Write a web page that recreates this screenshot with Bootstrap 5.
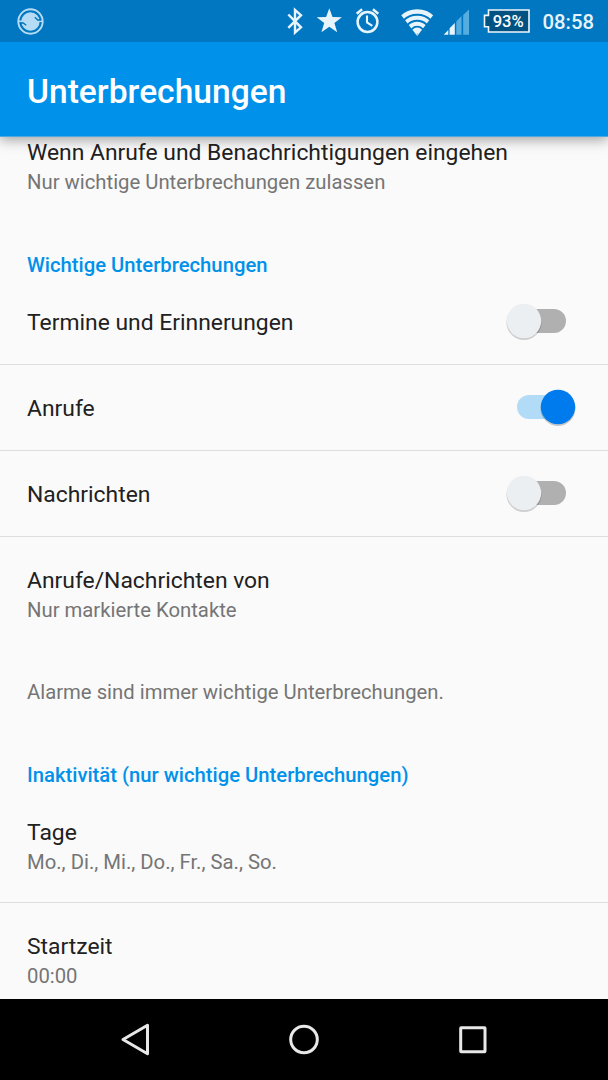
<!DOCTYPE html>
<html lang="de">
<head>
<meta charset="utf-8">
<meta name="viewport" content="width=device-width, initial-scale=1">
<title>Unterbrechungen</title>
<link rel="stylesheet" href="https://cdn.jsdelivr.net/npm/bootstrap@5.3.0/dist/css/bootstrap.min.css">
<style>
body{font-family:Roboto,"Liberation Sans",sans-serif;background:#fafafa;color:#212121;height:1080px}
svg{display:block;flex:none}
.statusbar{height:42px;background:#0077c0;color:#e8f4fc;padding-left:17px;padding-right:14px;position:relative;z-index:3}
.clock{font-size:20.3px;font-weight:500;line-height:42px;margin-left:12px;padding-top:1px}
.appbar{height:95px;background:#0091ea;border-bottom:1px solid #4fa9e0;box-shadow:0 3px 12px rgba(0,0,0,.36);z-index:2;padding:5px 27px 0}
.appbar h1{font-size:33.6px;font-weight:500;line-height:40px}
.prefs{flex:1 1 0;min-height:0}
.pref{padding:0 27px;border-bottom:1px solid #dedede}
.pref-title{font-size:22.86px;line-height:30px;padding-top:1px}
.pref-sub{font-size:20.3px;line-height:30px;color:#757575}
.pref .pref-sub{margin-top:-1px}
.section-label{font-size:20.25px;line-height:30px;font-weight:500;color:#0091ea;padding:0 27px;margin:0}
.toggle-row{height:86px;padding-top:1px}
.toggle-row svg{margin-bottom:2px}
.h-first{height:113px}.h-sec{height:29px}.h-from{height:140px;padding-top:28px}
.h-note{height:83px;padding:0 27px}.h-days{height:114px;padding-top:28px}.h-start{padding-top:28px}
.switch-off{margin-right:14px}.switch-on{margin-right:5px}
.navbuttons{height:81px;background:#000}
</style>
</head>
<body class="d-flex flex-column overflow-hidden">
<header class="statusbar d-flex align-items-center flex-shrink-0">
  <svg width="27" height="27" viewBox="0 0 27 27"><circle cx="13.500" cy="13.500" r="12.200" fill="none" stroke="#b5dcf4" stroke-width="1.900"/><circle cx="13.500" cy="13.500" r="9.200" fill="#b5dcf4"/><path d="M1.500 13.300h5M20.500 13.300h5" stroke="#b5dcf4" stroke-width="1.500"/><path d="M17.800 9.300l3 2.700h3M9.200 17.300l-3-2.300h-3" fill="none" stroke="#0077c0" stroke-width="1.400"/></svg>
  <div class="d-flex align-items-center ms-auto">
    <svg width="156" height="42" viewBox="286 0 156 42">
      <path d="M288.300 14.500L301 27.300l-6 5.200V10l6 5.200-12.700 12.600" fill="none" stroke="#e8f4fc" stroke-width="2.400"/>
      <path d="M329.300 8.300l3.200 8.800 9.400.2-7.500 5.700 2.800 9.300-7.900-5.500-7.900 5.500 2.800-9.300-7.500-5.700 9.400-.2z" fill="#e8f4fc"/>
      <g fill="none" stroke="#e8f4fc" stroke-width="2.500"><circle cx="367.500" cy="22" r="9.900"/><path d="M367 15.500v7l5.300 3.400" stroke-width="2.100"/><path d="M356.700 13.700l5.400-4.400M378.300 13.700l-5.400-4.400" stroke-width="2.500"/></g>
      <clipPath id="fan"><path d="M417.200 36L400.300 14a27 27 0 0 1 33.800 0z"/></clipPath>
      <g clip-path="url(#fan)" fill="none" stroke="#e8f4fc" stroke-width="4.400"><circle cx="417.200" cy="34" r="22.500"/><circle cx="417.200" cy="34" r="16.300" stroke-width="4"/><circle cx="417.200" cy="34" r="10.200" stroke-width="4"/><circle cx="417.200" cy="34" r="3" stroke-width="7"/></g>
    </svg>
    <svg width="89" height="42" viewBox="442 0 89 42">
      <path d="M443.700 34.700l4.600-4.600v4.600zM449.600 28.200l5.200-5.300v11.800h-5.200z" fill="#e8f4fc"/>
      <path d="M456.300 21.400l5.200-5.300v18.600h-5.200zM463.200 15l5.800-5.500v25.200h-5.800z" fill="#56aee0"/>
      <path d="M488.500 10H529v22h-40.500v-5.200h-4V15.400h4z" fill="#005283" stroke="#f0f7fc" stroke-width="1.600"/>
      <text x="508.200" y="26.800" text-anchor="middle" font-family="Roboto" font-size="17" font-weight="500" fill="#fff" textLength="31" lengthAdjust="spacingAndGlyphs">93%</text>
    </svg>
    <span class="clock">08:58</span>
  </div>
</header>
<div class="appbar position-relative d-flex align-items-center flex-shrink-0"><h1 class="m-0 text-white">Unterbrechungen</h1></div>
<main class="prefs overflow-hidden">
  <div class="pref h-first border-0"><div class="pref-title">Wenn Anrufe und Benachrichtigungen eingehen</div><div class="pref-sub">Nur wichtige Unterbrechungen zulassen</div></div>
  <h2 class="section-label h-sec">Wichtige Unterbrechungen</h2>
  <div class="pref toggle-row d-flex align-items-center justify-content-between"><span class="pref-title">Termine und Erinnerungen</span>
    <svg class="switch-off" width="68" height="42" viewBox="0 0 68 42"><rect x="10" y="9" width="57" height="24" rx="12" fill="#b0b0b0"/><circle cx="25" cy="22.500" r="17.500" fill="#000" opacity=".18"/><circle cx="25" cy="21" r="17.200" fill="#eceff1"/></svg></div>
  <div class="pref toggle-row d-flex align-items-center justify-content-between"><span class="pref-title">Anrufe</span>
    <svg class="switch-on" width="68" height="42" viewBox="0 0 68 42"><rect x="9" y="9" width="57" height="24" rx="12" fill="#b2dbf7"/><circle cx="50" cy="22.500" r="17.500" fill="#000" opacity=".2"/><circle cx="50" cy="21" r="17.200" fill="#007bed"/></svg></div>
  <div class="pref toggle-row d-flex align-items-center justify-content-between"><span class="pref-title">Nachrichten</span>
    <svg class="switch-off" width="68" height="42" viewBox="0 0 68 42"><rect x="10" y="9" width="57" height="24" rx="12" fill="#b0b0b0"/><circle cx="25" cy="22.500" r="17.500" fill="#000" opacity=".18"/><circle cx="25" cy="21" r="17.200" fill="#eceff1"/></svg></div>
  <div class="pref h-from border-0"><div class="pref-title">Anrufe/Nachrichten von</div><div class="pref-sub">Nur markierte Kontakte</div></div>
  <p class="h-note pref-sub m-0">Alarme sind immer wichtige Unterbrechungen.</p>
  <h2 class="section-label h-sec">Inaktivität (nur wichtige Unterbrechungen)</h2>
  <div class="pref h-days"><div class="pref-title">Tage</div><div class="pref-sub">Mo., Di., Mi., Do., Fr., Sa., So.</div></div>
  <div class="pref h-start border-0"><div class="pref-title">Startzeit</div><div class="pref-sub">00:00</div></div>
</main>
<nav class="navbuttons flex-shrink-0 d-flex justify-content-center align-items-center">
  <svg width="368" height="34" viewBox="120 1022 368 34" fill="none" stroke="#e8e8e8" stroke-width="3" stroke-linejoin="round"><path d="M123 1038.500l24.500-14.300v28.600z"/><circle cx="304" cy="1038.500" r="13.300"/><rect x="460.700" y="1026.700" width="24.300" height="24" rx=".5"/></svg>
</nav>
<script src="https://cdn.jsdelivr.net/npm/bootstrap@5.3.0/dist/js/bootstrap.bundle.min.js"></script>
</body>
</html>
